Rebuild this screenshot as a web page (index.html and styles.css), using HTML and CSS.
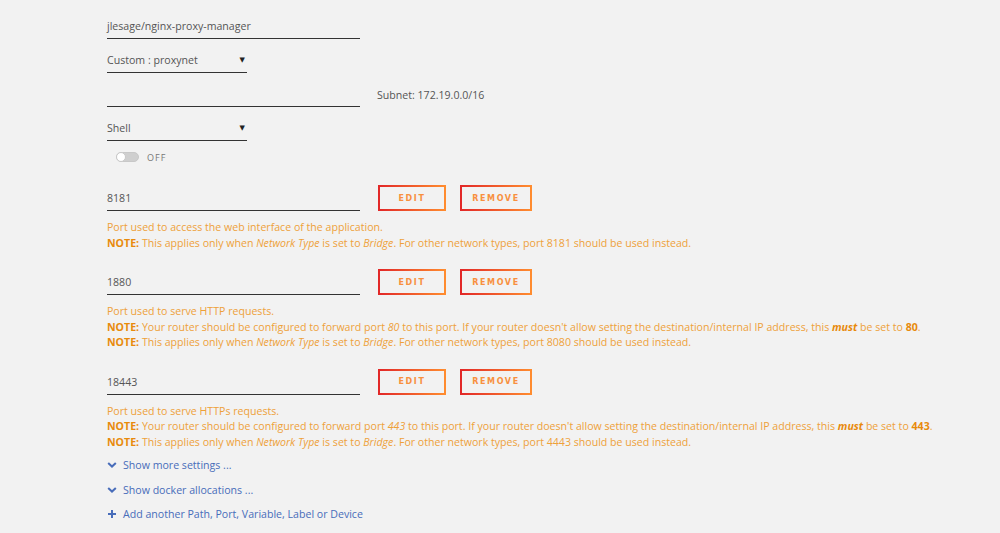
FILE: index.html
```html
<!DOCTYPE html>
<html>
<head>
  <title>Update Container</title>
  <link rel="stylesheet" href="styles.css">
</head>
<body>
  <form class="settings">
    <div class="row">
      <div class="field wide">jlesage/nginx-proxy-manager</div>
    </div>

    <div class="row">
      <div class="field narrow select">Custom : proxynet<span class="caret">&#9660;</span></div>
    </div>

    <div class="row">
      <div class="field wide"></div>
      <span class="aside">Subnet: 172.19.0.0/16</span>
    </div>

    <div class="row">
      <div class="field narrow select">Shell<span class="caret">&#9660;</span></div>
    </div>

    <div class="switch-row">
      <span class="switch"><span class="knob"></span></span>
      <span class="switch-label">OFF</span>
    </div>

    <div class="port-row">
      <div class="field wide">8181</div>
      <button type="button" class="btn edit">Edit</button>
      <button type="button" class="btn remove">Remove</button>
    </div>
    <div class="desc">
      Port used to access the web interface of the application.<br>
      <b>NOTE:</b> This applies only when <i>Network Type</i> is set to <i>Bridge</i>. For other network types, port 8181 should be used instead.
    </div>

    <div class="port-row">
      <div class="field wide">1880</div>
      <button type="button" class="btn edit">Edit</button>
      <button type="button" class="btn remove">Remove</button>
    </div>
    <div class="desc">
      Port used to serve HTTP requests.<br>
      <b>NOTE:</b> Your router should be configured to forward port <i>80</i> to this port. If your router doesn't allow setting the destination/internal IP address, this <b><i>must</i></b> be set to <b>80</b>.<br>
      <b>NOTE:</b> This applies only when <i>Network Type</i> is set to <i>Bridge</i>. For other network types, port 8080 should be used instead.
    </div>

    <div class="port-row">
      <div class="field wide">18443</div>
      <button type="button" class="btn edit">Edit</button>
      <button type="button" class="btn remove">Remove</button>
    </div>
    <div class="desc">
      Port used to serve HTTPs requests.<br>
      <b>NOTE:</b> Your router should be configured to forward port <i>443</i> to this port. If your router doesn't allow setting the destination/internal IP address, this <b><i>must</i></b> be set to <b>443</b>.<br>
      <b>NOTE:</b> This applies only when <i>Network Type</i> is set to <i>Bridge</i>. For other network types, port 4443 should be used instead.
    </div>

    <div class="links">
      <a class="link" href="#">
        <svg class="icon" viewBox="0 0 10 10"><path d="M1.2 3 L5 6.6 L8.8 3" fill="none" stroke="currentColor" stroke-width="2"/></svg>
        Show more settings ...
      </a>
      <a class="link" href="#">
        <svg class="icon" viewBox="0 0 10 10"><path d="M1.2 3 L5 6.6 L8.8 3" fill="none" stroke="currentColor" stroke-width="2"/></svg>
        Show docker allocations ...
      </a>
      <a class="link" href="#">
        <svg class="icon" viewBox="0 0 10 10"><path d="M5 1 V9 M1 5 H9" fill="none" stroke="currentColor" stroke-width="2"/></svg>
        Add another Path, Port, Variable, Label or Device
      </a>
    </div>
  </form>
</body>
</html>
```

FILE: styles.css
```css
body {
  margin: 0;
  background: #f2f2f2;
  font-family: "Open Sans", "DejaVu Sans", sans-serif;
  font-size: 10.6px;
  color: #555;
}
.settings {
  padding: 16px 0 0 107px;
}
.row {
  display: flex;
  align-items: center;
  height: 23px;
  margin-bottom: 11px;
}
.field {
  box-sizing: border-box;
  height: 23px;
  line-height: 20px;
  border-bottom: 1px solid #333;
  color: #555;
  white-space: nowrap;
}
.field.wide {
  width: 253px;
}
.field.narrow {
  width: 140px;
}
.select {
  display: flex;
  justify-content: space-between;
  padding-right: 2px;
}
.caret {
  font-size: 7px;
  color: #222;
}
.aside {
  margin-left: 17px;
  margin-top: -2px;
  color: #555;
}
.switch-row {
  display: flex;
  align-items: center;
  height: 12px;
  margin: -1px 0 0 9px;
}
.switch {
  position: relative;
  box-sizing: border-box;
  width: 23px;
  height: 10px;
  border: 1px solid #c8c8c8;
  border-radius: 5px;
  background: #cfcfcf;
}
.knob {
  position: absolute;
  left: -1px;
  top: -1px;
  width: 10px;
  height: 10px;
  border-radius: 50%;
  background: #fff;
  border: 1px solid #c8c8c8;
  box-sizing: border-box;
}
.switch-label {
  margin-left: 8px;
  font-size: 9px;
  letter-spacing: 1px;
  color: #777;
}
.port-row {
  display: flex;
  align-items: flex-end;
  margin-top: 22px;
}
.desc + .port-row {
  margin-top: 18px;
}
.btn {
  box-sizing: border-box;
  height: 26px;
  padding: 0;
  background: transparent;
  border: 2px solid;
  border-image: linear-gradient(90deg, #e22828, #ff8c2f) 1;
  font-family: "DejaVu Sans", sans-serif;
  font-size: 8px;
  font-weight: bold;
  letter-spacing: 1.6px;
  text-transform: uppercase;
  color: #f8903e;
}
.btn.edit {
  width: 68px;
  margin-left: 18px;
}
.btn.remove {
  width: 72px;
  margin-left: 14px;
}
.desc {
  margin-top: 9px;
  line-height: 15.5px;
  color: #eea13a;
  white-space: nowrap;
}
.desc b {
  color: #e88a0c;
}
.links {
  display: flex;
  flex-direction: column;
  gap: 8.5px;
  margin-top: 7px;
}
.link {
  display: flex;
  align-items: center;
  height: 16px;
  color: #486dba;
  text-decoration: none;
}
.icon {
  width: 10px;
  height: 10px;
  margin-right: 6px;
}
```
